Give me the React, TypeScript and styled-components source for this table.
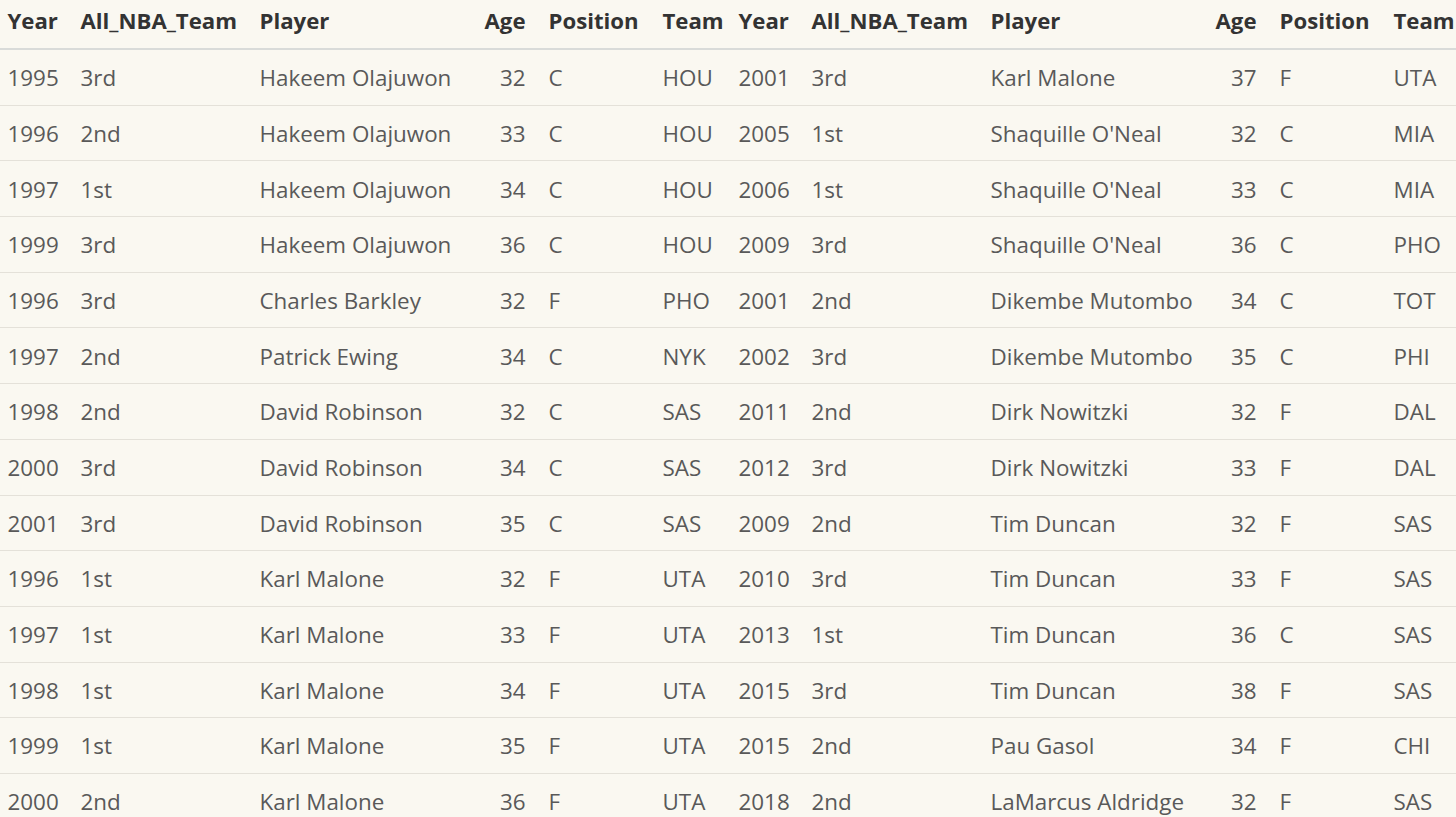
import React, { FC } from 'react'
import styled, { createGlobalStyle } from 'styled-components'

type Row = [string, string, string, number, string, string]

const leftRows: Row[] = [
  ['1995', '3rd', 'Hakeem Olajuwon', 32, 'C', 'HOU'],
  ['1996', '2nd', 'Hakeem Olajuwon', 33, 'C', 'HOU'],
  ['1997', '1st', 'Hakeem Olajuwon', 34, 'C', 'HOU'],
  ['1999', '3rd', 'Hakeem Olajuwon', 36, 'C', 'HOU'],
  ['1996', '3rd', 'Charles Barkley', 32, 'F', 'PHO'],
  ['1997', '2nd', 'Patrick Ewing', 34, 'C', 'NYK'],
  ['1998', '2nd', 'David Robinson', 32, 'C', 'SAS'],
  ['2000', '3rd', 'David Robinson', 34, 'C', 'SAS'],
  ['2001', '3rd', 'David Robinson', 35, 'C', 'SAS'],
  ['1996', '1st', 'Karl Malone', 32, 'F', 'UTA'],
  ['1997', '1st', 'Karl Malone', 33, 'F', 'UTA'],
  ['1998', '1st', 'Karl Malone', 34, 'F', 'UTA'],
  ['1999', '1st', 'Karl Malone', 35, 'F', 'UTA'],
  ['2000', '2nd', 'Karl Malone', 36, 'F', 'UTA'],
]

const rightRows: Row[] = [
  ['2001', '3rd', 'Karl Malone', 37, 'F', 'UTA'],
  ['2005', '1st', "Shaquille O'Neal", 32, 'C', 'MIA'],
  ['2006', '1st', "Shaquille O'Neal", 33, 'C', 'MIA'],
  ['2009', '3rd', "Shaquille O'Neal", 36, 'C', 'PHO'],
  ['2001', '2nd', 'Dikembe Mutombo', 34, 'C', 'TOT'],
  ['2002', '3rd', 'Dikembe Mutombo', 35, 'C', 'PHI'],
  ['2011', '2nd', 'Dirk Nowitzki', 32, 'F', 'DAL'],
  ['2012', '3rd', 'Dirk Nowitzki', 33, 'F', 'DAL'],
  ['2009', '2nd', 'Tim Duncan', 32, 'F', 'SAS'],
  ['2010', '3rd', 'Tim Duncan', 33, 'F', 'SAS'],
  ['2013', '1st', 'Tim Duncan', 36, 'C', 'SAS'],
  ['2015', '3rd', 'Tim Duncan', 38, 'F', 'SAS'],
  ['2015', '2nd', 'Pau Gasol', 34, 'F', 'CHI'],
  ['2018', '2nd', 'LaMarcus Aldridge', 32, 'F', 'SAS'],
]

const columns = [
  { name: 'Year', width: 73 },
  { name: 'All_NBA_Team', width: 179 },
  { name: 'Player', width: 225 },
  { name: 'Age', width: 64, right: true },
  { name: 'Position', width: 114 },
  { name: 'Team', width: 76 },
]

const TeamTable: FC<{ rows: Row[] }> = ({ rows }) => (
  <Table>
    <colgroup>
      {columns.map((c) => (
        <col key={c.name} style={{ width: c.width }} />
      ))}
    </colgroup>
    <thead>
      <tr>
        {columns.map((c) => (
          <HeadCell key={c.name} right={c.right}>
            {c.name}
          </HeadCell>
        ))}
      </tr>
    </thead>
    <tbody>
      {rows.map((r, i) => (
        <BodyRow key={i}>
          {r.map((v, j) => (
            <Cell key={j} right={columns[j].right}>
              {v}
            </Cell>
          ))}
        </BodyRow>
      ))}
    </tbody>
  </Table>
)

const App: FC = () => (
  <>
    <GlobalStyle />
    <Page>
      <TeamTable rows={leftRows} />
      <TeamTable rows={rightRows} />
    </Page>
  </>
)

export default App

const GlobalStyle = createGlobalStyle`
  html, body {
    margin: 0;
    padding: 0;
    background: #faf8f1;
  }
  body {
    font-family: 'Open Sans', 'Noto Sans', sans-serif;
    overflow: hidden;
  }
`

const Page = styled.div`
  display: flex;
  align-items: flex-start;
  height: 817px;
  overflow: hidden;
  margin-left: -4px;
  background: #faf8f1;
`

const Table = styled.table`
  flex: 0 0 731px;
  width: 731px;
  table-layout: fixed;
  border-collapse: collapse;
  font-size: 22.4px;
  line-height: 30px;
`

const HeadCell = styled.th<{ right?: boolean }>`
  padding: 5.5px 11.5px 12.5px;
  text-align: ${(p) => (p.right ? 'right' : 'left')};
  font-size: 22.2px;
  font-weight: 700;
  color: #333333;
  white-space: nowrap;
  border-bottom: 2px solid #d9dbd9;
`

const BodyRow = styled.tr`
  border-bottom: 1px solid #e4e1d9;
`

const Cell = styled.td<{ right?: boolean }>`
  padding: 13.2px 11.5px 11.5px;
  text-align: ${(p) => (p.right ? 'right' : 'left')};
  color: #595959;
  white-space: nowrap;
`
